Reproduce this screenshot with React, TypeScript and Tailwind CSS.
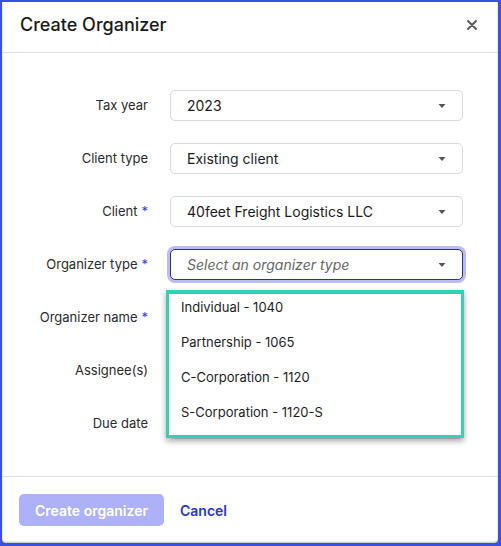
import React from 'react';

const rows = [
  { label: 'Tax year', value: '2023' },
  { label: 'Client type', value: 'Existing client' },
  { label: 'Client', value: '40feet Freight Logistics LLC', required: true },
  { label: 'Organizer type', placeholder: 'Select an organizer type', required: true, focused: true },
  { label: 'Organizer name', required: true },
  { label: 'Assignee(s)' },
  { label: 'Due date' },
];

const options = ['Individual - 1040', 'Partnership - 1065', 'C-Corporation - 1120', 'S-Corporation - 1120-S'];

function Caret() {
  return (
    <svg width="10" height="6" viewBox="0 0 10 6" className="shrink-0">
      <path d="M1.5 1h7L5 5z" fill="#555" />
    </svg>
  );
}

function SelectBox({ value, placeholder, focused }: { value?: string; placeholder?: string; focused?: boolean }) {
  return (
    <div
      className={`flex h-[31px] items-center justify-between rounded-[5px] border bg-white pl-[16px] pr-[15px] ${
        focused ? 'border-[#2d3291] shadow-[0_0_0_3px_#babbf7]' : 'border-[#dadada]'
      }`}
    >
      {value ? (
        <span className="text-[14px] text-[#1c1c1c]">{value}</span>
      ) : (
        <span className="text-[14px] italic text-[#666]">{placeholder}</span>
      )}
      <Caret />
    </div>
  );
}

export default function App() {
  return (
    <div className="h-[546px] w-[501px] bg-[#3a4fe4] pb-[3px] pl-[2px] pr-[3px] pt-[2px] font-['Inter',sans-serif]">
      <div className="relative flex h-full flex-col rounded-b-[4px] bg-white shadow-[inset_0_-1px_2px_rgba(0,0,0,0.25)]">
        {/* header */}
        <div className="flex h-[51px] items-center justify-between border-b border-[#dedede] pb-[5px] pl-[18px] pr-[21px]">
          <h1 className="text-[18px] font-medium text-[#1a1a1a]">Create Organizer</h1>
          <svg width="10" height="10" viewBox="0 0 10 10">
            <path d="M1 1l8 8M9 1l-8 8" stroke="#555" strokeWidth="1.8" strokeLinecap="round" />
          </svg>
        </div>

        {/* form */}
        <div className="flex flex-1 flex-col gap-[22px] pr-[35px] pt-[37px]">
          {rows.map((r) => (
            <div key={r.label} className="flex h-[31px] items-center gap-[22px]">
              <div className="w-[146px] text-right text-[13px] text-[#2b2b2b]">
                {r.label}
                {r.required && <span className="ml-[4px] text-[#3c40d6]">*</span>}
              </div>
              <div className="flex-1">
                {(r.value || r.placeholder) ? (
                  <SelectBox value={r.value} placeholder={r.placeholder} focused={r.focused} />
                ) : (
                  <div className="h-[31px] rounded-[5px] border border-[#dadada]" />
                )}
              </div>
            </div>
          ))}
        </div>

        {/* dropdown */}
        <div className="absolute left-[164px] top-[288px] w-[298px] border-[3px] border-[#30d3b8] bg-white shadow-[0_3px_6px_rgba(0,0,0,0.35)]">
          <div className="border-t border-[#9a9a9a] pb-[1px]">
            {options.map((o) => (
              <div key={o} className="h-[35px] pl-[12px] pt-[3px] text-[13px] leading-[20px] text-[#1e1e1e]">
                {o}
              </div>
            ))}
          </div>
        </div>

        {/* footer */}
        <div className="flex h-[67px] items-center gap-[16px] border-t border-[#dedede] pl-[17px]">
          <button className="h-[32px] w-[145px] rounded-[5px] bg-[#aeb1f8] text-[14px] font-semibold text-white">
            Create organizer
          </button>
          <button className="text-[14px] font-semibold text-[#2b37c6]">Cancel</button>
        </div>
      </div>
    </div>
  );
}
